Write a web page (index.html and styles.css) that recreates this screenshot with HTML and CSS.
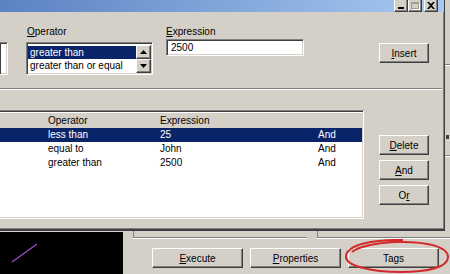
FILE: index.html
```html
<!DOCTYPE html>
<html lang="en">
<head>
    <meta charset="UTF-8">
    <title>Query Criteria</title>
    <link rel="stylesheet" href="styles.css">
</head>
<body>
    <div class="screen">
        <div class="upper">
            <div class="dialog">
                <div class="titlebar">
                    <span class="cap-btn cap-min"><i></i></span>
                    <span class="cap-btn cap-max"><i></i></span>
                    <span class="cap-btn cap-close">
                        <svg width="8" height="7" viewBox="0 0 8 7"><path d="M0 0h2l2 2 2-2h2L5 3.5 8 7H6L4 5 2 7H0l3-3.5z" fill="#000"/></svg>
                    </span>
                </div>

                <div class="dlg-body">
                    <div class="criteria">
                        <div class="stub sunken"></div>

                        <div class="field op-field">
                            <div class="field-label"><u>O</u>perator</div>
                            <div class="listbox sunken">
                                <div class="lb-items">
                                    <div class="lb-item selected">greater than</div>
                                    <div class="lb-item">greater than or equal</div>
                                </div>
                                <div class="vscroll">
                                    <span class="sb-btn raised">
                                        <svg width="7" height="4" viewBox="0 0 7 4"><path d="M3.5 0L7 4H0z" fill="#000"/></svg>
                                    </span>
                                    <span class="sb-btn raised">
                                        <svg width="7" height="4" viewBox="0 0 7 4"><path d="M0 0h7L3.5 4z" fill="#000"/></svg>
                                    </span>
                                </div>
                            </div>
                        </div>

                        <div class="field expr-field">
                            <div class="field-label"><u>E</u>xpression</div>
                            <div class="edit sunken">2500</div>
                        </div>

                        <button class="btn insert-btn raised"><u>I</u>nsert</button>
                    </div>

                    <div class="etched"></div>

                    <div class="list-area">
                        <div class="listview">
                            <div class="lv-row lv-head">
                                <span></span><span>Operator</span><span>Expression</span><span></span>
                            </div>
                            <div class="lv-row selected">
                                <span></span><span>less than</span><span>25</span><span>And</span>
                            </div>
                            <div class="lv-row">
                                <span></span><span>equal to</span><span>John</span><span>And</span>
                            </div>
                            <div class="lv-row">
                                <span></span><span>greater than</span><span>2500</span><span>And</span>
                            </div>
                        </div>

                        <div class="side-buttons">
                            <button class="btn raised"><u>D</u>elete</button>
                            <button class="btn raised"><u>A</u>nd</button>
                            <button class="btn raised">O<u>r</u></button>
                        </div>
                    </div>
                </div>
            </div>

            <div class="strip">
                <div class="strip-line"></div>
                <div class="strip-arrow"></div>
                <div class="strip-line low"></div>
            </div>
        </div>

        <div class="lower">
            <div class="canvas">
                <svg width="123" height="42" viewBox="0 0 123 42"><line x1="12" y1="30" x2="37" y2="12" stroke="#a24bd0" stroke-width="1.2"/></svg>
            </div>
            <div class="app-panel">
                <div class="panel-edge">
                    <div class="edge-left"></div>
                    <div class="edge-right"></div>
                </div>
                <div class="app-buttons">
                    <button class="btn app-btn raised"><u>E</u>xecute</button>
                    <button class="btn app-btn raised"><u>P</u>roperties</button>
                    <button class="btn app-btn raised">Ta<u>g</u>s</button>
                </div>
            </div>
        </div>

        <svg class="ring" width="108" height="38" viewBox="0 0 108 38">
            <path d="M60 3C30 2 4 8 3 19c-1 10 25 16 55 16 28 0 47-5 47-15C105 10 85 4 52 5 32 6 14 10 9 15" fill="none" stroke="#d22a2a" stroke-width="2"/>
        </svg>
    </div>
</body>
</html>
```

FILE: styles.css
```css
* {
    margin: 0;
    padding: 0;
    box-sizing: border-box;
}

body {
    font-family: 'Liberation Sans', Arial, sans-serif;
    font-size: 10px;
    color: #000;
    background: #d4d0c8;
}

.screen {
    position: relative;
    width: 450px;
    height: 274px;
    overflow: hidden;
}

/* win2k bevels */
.raised {
    border: 1px solid;
    border-color: #fff #404040 #404040 #fff;
    box-shadow: inset -1px -1px #808080;
    background: #d4d0c8;
}

.sunken {
    border: 1px solid;
    border-color: #808080 #fff #fff #808080;
    box-shadow: inset 1px 1px #404040, inset -1px -1px #d4d0c8;
    background: #fff;
}

.btn {
    font-family: inherit;
    font-size: 10px;
    color: #000;
    height: 20px;
    width: 50px;
    display: flex;
    align-items: center;
    justify-content: center;
}

.upper {
    display: flex;
    height: 231px;
}

.dialog {
    width: 445px;
    display: flex;
    flex-direction: column;
    border-right: 1px solid #404040;
    box-shadow: inset -1px 0 #808080;
}

.titlebar {
    height: 12px;
    background: linear-gradient(90deg, #5b82c3, #a6caf0);
    display: flex;
    justify-content: flex-end;
    padding-right: 6px;
}

.cap-btn {
    width: 14px;
    height: 12px;
    background: #d4d0c8;
    border-left: 1px solid #fff;
    border-right: 1px solid #404040;
    border-bottom: 1px solid #404040;
    box-shadow: inset -1px -1px #808080;
    display: flex;
    align-items: center;
    justify-content: center;
}

.cap-max {
    margin-right: 2px;
}

.cap-min i {
    width: 6px;
    height: 2px;
    background: #000;
    margin-top: 5px;
}

.cap-max i {
    width: 8px;
    height: 7px;
    border: 1px solid #a09c94;
    border-top-width: 2px;
    box-shadow: 1px 1px #fff;
}

.dlg-body {
    flex: 1;
    border-bottom: 2px solid #404040;
    box-shadow: inset 0 -1px #808080;
}

.criteria {
    display: flex;
    align-items: flex-start;
    padding-top: 14px;
    height: 63px;
}

.stub {
    width: 8px;
    height: 33px;
    margin-top: 16px;
    border-left: none;
}

.field-label {
    height: 12px;
    line-height: 12px;
}

.op-field {
    margin-left: 18px;
}

.op-field .field-label {
    margin-bottom: 4px;
    padding-left: 1px;
}

.listbox {
    width: 127px;
    height: 33px;
    display: flex;
    padding: 2px 1px 1px 1px;
}

.lb-items {
    flex: 1;
    padding-top: 1px;
}

.lb-item {
    height: 13px;
    line-height: 13px;
    padding-left: 2px;
}

.selected {
    background: #0a246a;
    color: #fff;
}

.vscroll {
    width: 15px;
    display: flex;
    flex-direction: column;
}

.sb-btn {
    flex: 1;
    display: flex;
    align-items: center;
    justify-content: center;
}

.expr-field {
    margin-left: 13px;
}

.expr-field .field-label {
    margin-bottom: 1px;
}

.edit {
    width: 138px;
    height: 17px;
    line-height: 15px;
    padding-left: 4px;
}

.insert-btn {
    margin-left: 75px;
    margin-top: 17px;
}

.etched {
    height: 2px;
    margin-top: 13px;
    border-top: 1px solid #808080;
    border-bottom: 1px solid #fff;
    margin-right: 2px;
}

.list-area {
    display: flex;
    margin-top: 20px;
}

.listview {
    width: 364px;
    height: 109px;
    background: #fff;
    border-top: 1px solid #808080;
    border-right: 1px solid #fff;
    border-bottom: 1px solid #fff;
    box-shadow: inset 0 1px #404040, inset -1px -1px #d4d0c8;
    padding: 1px 1px 1px 0;
}

.lv-row {
    display: grid;
    grid-template-columns: 44px 112px 158px 1fr;
    height: 14px;
    line-height: 14px;
}

.lv-row span {
    padding-left: 4px;
    white-space: nowrap;
}

.lv-head {
    height: 16px;
    line-height: 16px;
    background: #d4d0c8;
    border-top: 1px solid #fff;
    line-height: 15px;
}

.side-buttons {
    display: flex;
    flex-direction: column;
    gap: 5px;
    margin-left: 15px;
    margin-top: 25px;
}

.strip {
    flex: 1;
    background: #d4d0c8;
}

.strip-line {
    height: 2px;
    margin-top: 64px;
    border-top: 1px solid #808080;
    border-bottom: 1px solid #fff;
}

.strip-arrow {
    width: 3px;
    height: 4px;
    margin-top: 69px;
    margin-left: 1px;
    background: #404040;
}

.strip-line.low {
    margin-top: 16px;
}

.lower {
    display: flex;
    height: 43px;
}

.canvas {
    width: 123px;
    margin-top: 1px;
    background: #000;
}

.canvas svg {
    display: block;
}

.app-panel {
    flex: 1;
}

.panel-edge {
    display: flex;
    height: 7px;
    margin-left: 10px;
}

.edge-left {
    width: 174px;
    border-left: 1px solid #808080;
    border-bottom: 1px solid #808080;
    box-shadow: 0 1px #fff;
}

.edge-right {
    flex: 1;
    margin-left: 10px;
    border-left: 1px solid #808080;
    border-bottom: 1px solid #808080;
    box-shadow: 0 1px #fff;
}

.app-buttons {
    display: flex;
    gap: 7px;
    margin-top: 10px;
    margin-left: 29px;
}

.app-btn {
    width: 91px;
}

.ring {
    position: absolute;
    left: 343px;
    top: 237px;
}
```
